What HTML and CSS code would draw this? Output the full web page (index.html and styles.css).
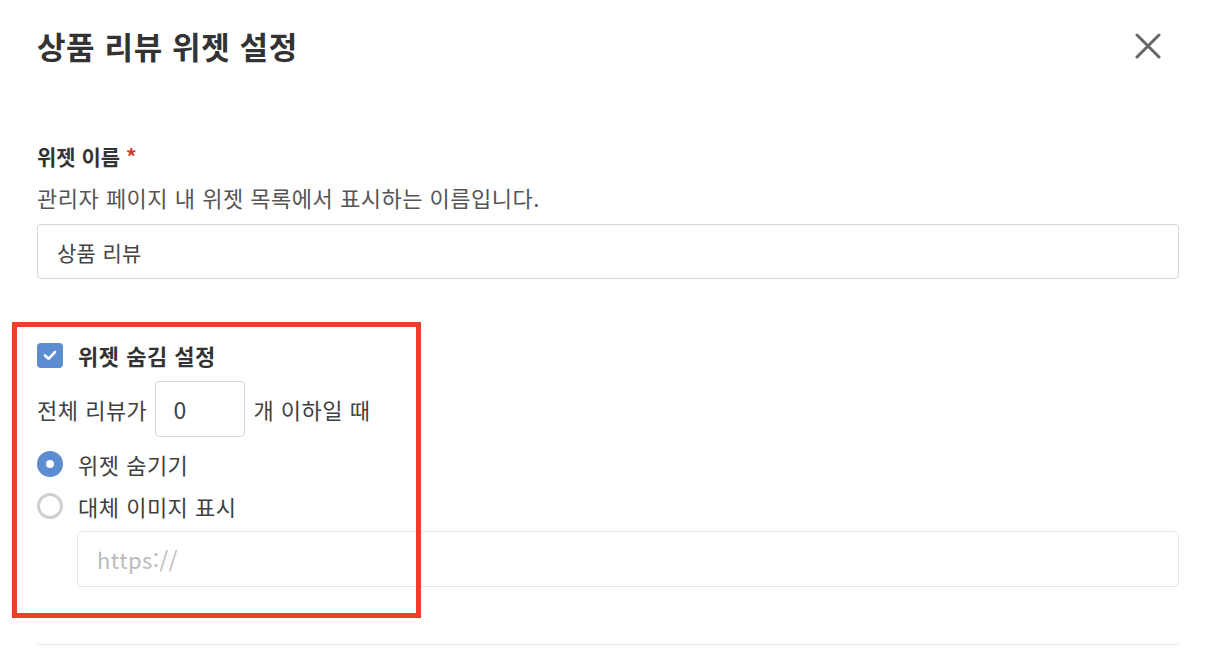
FILE: index.html
```html
<!DOCTYPE html>
<html lang="ko">
<head>
  <meta charset="UTF-8" />
  <meta name="viewport" content="width=device-width, initial-scale=1.0" />
  <title>상품 리뷰 위젯 설정</title>
  <link rel="stylesheet" href="styles.css">
</head>
<body>
  <div class="header">
    <h1>상품 리뷰 위젯 설정</h1>
    <button class="close" aria-label="닫기">
      <svg width="26" height="26" viewBox="0 0 26 26">
        <path d="M2 2 L24 24 M24 2 L2 24" stroke="#666" stroke-width="3" stroke-linecap="round" fill="none" />
      </svg>
    </button>
  </div>

  <div class="field">
    <label class="field-label">위젯 이름 <span class="required">*</span></label>
    <p class="field-help">관리자 페이지 내 위젯 목록에서 표시하는 이름입니다.</p>
    <input type="text" class="text-input" value="상품 리뷰" />
  </div>

  <div class="hide-section">
    <div class="highlight"></div>

    <label class="check-row">
      <span class="checkbox">
        <svg width="18" height="18" viewBox="0 0 18 18">
          <path d="M4 9.5 L7.6 12.8 L14 6" stroke="#fff" stroke-width="2.6" stroke-linecap="round" stroke-linejoin="round" fill="none" />
        </svg>
      </span>
      <strong>위젯 숨김 설정</strong>
    </label>

    <div class="count-row">
      <span>전체 리뷰가</span>
      <input type="text" class="count-input" value="0" />
      <span>개 이하일 때</span>
    </div>

    <label class="radio-row">
      <span class="radio checked"></span>
      <span>위젯 숨기기</span>
    </label>
    <label class="radio-row">
      <span class="radio"></span>
      <span>대체 이미지 표시</span>
    </label>

    <input type="text" class="text-input url-input" placeholder="https://" />
  </div>

  <hr class="divider" />
</body>
</html>
```

FILE: styles.css
```css
* {
  box-sizing: border-box;
}
body {
  margin: 0;
  padding: 0 33px 0 37px;
  background: #fff;
  color: #404040;
  font-family: "Noto Sans CJK KR", "Noto Sans", sans-serif;
  font-size: 22px;
  letter-spacing: 0.5px;
}
.header {
  height: 92px;
  display: flex;
  align-items: center;
  justify-content: space-between;
}
h1 {
  margin: 0;
  font-size: 31px;
  font-weight: 700;
  color: #333;
  line-height: 40px;
  letter-spacing: 0.6px;
}
.close {
  border: 0;
  background: none;
  padding: 0;
  margin-right: 18px;
  width: 26px;
  height: 26px;
  display: flex;
  cursor: pointer;
}
.field {
  margin-top: 49px;
  display: flex;
  flex-direction: column;
}
.field-label {
  font-weight: 700;
  color: #333;
  line-height: 30px;
  font-size: 21px;
  letter-spacing: 0;
}
.required {
  color: #d33a2c;
}
.field-help {
  margin: 11px 0 0;
  line-height: 30px;
  color: #555;
}
.text-input {
  margin-top: 12px;
  width: 100%;
  height: 55px;
  border: 1px solid #d6d6d6;
  border-radius: 4px;
  padding: 0 19px;
  font: inherit;
  font-size: 21px;
  letter-spacing: 0.3px;
  color: #444;
  outline: none;
}
.hide-section {
  position: relative;
  margin-top: 61px;
  display: flex;
  flex-direction: column;
}
.highlight {
  position: absolute;
  left: -25px;
  top: -18px;
  width: 409px;
  height: 296px;
  border: 5px solid #e6432b;
  pointer-events: none;
}
.check-row,
.radio-row {
  display: flex;
  align-items: center;
  gap: 15px;
  line-height: 30px;
}
.check-row strong {
  color: #333;
}
.checkbox {
  width: 26px;
  height: 25px;
  border-radius: 4px;
  background: #5c8dd0;
  display: flex;
  align-items: center;
  justify-content: center;
}
.count-row {
  margin-top: 11px;
  display: flex;
  align-items: center;
  gap: 8px;
}
.count-input {
  width: 90px;
  height: 56px;
  border: 1px solid #d6d6d6;
  border-radius: 4px;
  padding: 0 17px;
  font: inherit;
  font-size: 23px;
  color: #444;
  outline: none;
}
.radio-row {
  margin-top: 12px;
}
.radio {
  width: 26px;
  height: 26px;
  border-radius: 50%;
  border: 3px solid #cfcfcf;
  flex-shrink: 0;
}
.radio.checked {
  border: 0;
  background: #5c8dd0;
  display: flex;
  align-items: center;
  justify-content: center;
}
.radio.checked::after {
  content: "";
  width: 8px;
  height: 8px;
  border-radius: 50%;
  background: #fff;
}
.url-input {
  margin-top: 10px;
  margin-left: 40px;
  width: auto;
  height: 56px;
  border-color: #e6e6e6;
  border-radius: 5px;
  font-size: 22px;
  letter-spacing: 0.5px;
}
.url-input::placeholder {
  color: #bbb;
}
.divider {
  margin: 57px 0 0;
  border: 0;
  border-top: 1px solid #e6e6e6;
}
```
